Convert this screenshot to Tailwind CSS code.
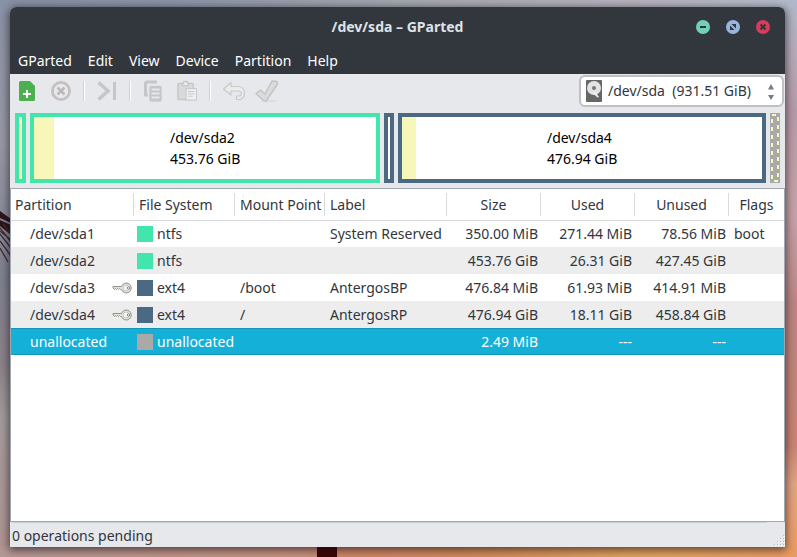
<!DOCTYPE html>
<html lang="en">
<head>
<meta charset="utf-8">
<meta name="viewport" content="width=device-width, initial-scale=1">
<title>/dev/sda – GParted</title>
<script src="https://cdn.jsdelivr.net/npm/@tailwindcss/browser@4"></script>
</head>
<body class="relative isolate flex h-screen flex-col overflow-hidden bg-[#a99598] px-3 pt-[7px] pb-[10px] pl-[10px] font-['Noto_Sans','Open_Sans',sans-serif] text-sm text-[#31363d]">

<!-- Desktop wallpaper -->
<svg class="absolute inset-0 -z-10 h-full w-full" viewBox="0 0 797 557" preserveAspectRatio="none" aria-hidden="true">
  <defs>
    <linearGradient id="top" x1="0" x2="1"><stop offset="0" stop-color="#8790a3"/><stop offset=".2" stop-color="#8b93a7"/><stop offset=".5" stop-color="#a3a7b0"/><stop offset=".8" stop-color="#b6b3bf"/><stop offset="1" stop-color="#b3bccb"/></linearGradient>
    <linearGradient id="left" x1="0" x2="0" y1="0" y2="1"><stop offset="0" stop-color="#8991a5"/><stop offset=".25" stop-color="#9799a5"/><stop offset=".5" stop-color="#7d818f"/><stop offset=".65" stop-color="#8b8289"/><stop offset=".75" stop-color="#a39b9b"/><stop offset="1" stop-color="#b09392"/></linearGradient>
    <linearGradient id="right" x1="0" x2="0" y1="0" y2="1"><stop offset="0" stop-color="#b0b9ca"/><stop offset=".2" stop-color="#b59aa8"/><stop offset=".38" stop-color="#c5a2a6"/><stop offset=".55" stop-color="#bb8581"/><stop offset=".8" stop-color="#c98372"/><stop offset=".87" stop-color="#e0a483"/><stop offset="1" stop-color="#eb9a60"/></linearGradient>
    <linearGradient id="bottom" x1="0" x2="1"><stop offset="0" stop-color="#b29795"/><stop offset=".38" stop-color="#c69280"/><stop offset=".43" stop-color="#cd8568"/><stop offset=".6" stop-color="#d38a58"/><stop offset=".8" stop-color="#dfa25c"/><stop offset="1" stop-color="#e99b62"/></linearGradient>
  </defs>
  <rect width="797" height="8" fill="url(#top)"/>
  <rect width="12" height="557" fill="url(#left)"/>
  <rect x="784" width="13" height="557" fill="url(#right)"/>
  <rect y="546" width="797" height="11" fill="url(#bottom)"/>
  <path d="M0 211l11 8v4l-11-5zM0 220l11 5v10l-11-9z" fill="#2b151a"/>
  <path d="M0 228l11 14M0 234l11 14M0 241l11 15M0 248l8 14M3 224l8 10M0 231l11 9" stroke="#42282e" stroke-width="1.3" fill="none"/>
  <rect x="317" y="546" width="20" height="11" fill="#3c0606"/>
</svg>

<div class="flex min-h-0 flex-1 flex-col rounded-t-md bg-[#e7e8eb] shadow-[0_2px_9px_1px_rgba(25,15,20,0.65)]">

  <header class="rounded-t-md bg-[#32373e] text-white">
    <div class="grid h-10 grid-cols-[1fr_auto_1fr] items-center px-[15px]">
      <span></span>
      <h1 class="font-bold text-[#dfe2e6]">/dev/sda – GParted</h1>
      <div class="flex justify-end gap-4">
        <button type="button" aria-label="Minimize"><svg class="size-[14px]" viewBox="0 0 14 14"><circle cx="7" cy="7" r="7" fill="#71d0b7"/><path d="M4 7h6" stroke="#32373e" stroke-width="2"/></svg></button>
        <button type="button" aria-label="Maximize"><svg class="size-[14px]" viewBox="0 0 14 14"><circle cx="7" cy="7" r="7" fill="#98b5e0"/><path d="M5.500 4H10v4.500zM4 5.500V10h4.500z" fill="#32373e"/></svg></button>
        <button type="button" aria-label="Close"><svg class="size-[14px]" viewBox="0 0 14 14"><circle cx="7" cy="7" r="7" fill="#d83b5c"/><path d="M4.500 4.500l5 5M9.500 4.500l-5 5" stroke="#32373e" stroke-width="2"/></svg></button>
      </div>
    </div>
    <nav class="flex h-[27px] items-center gap-4 px-2" aria-label="Main menu">
      <button type="button">GParted</button>
      <button type="button">Edit</button>
      <button type="button">View</button>
      <button type="button">Device</button>
      <button type="button">Partition</button>
      <button type="button">Help</button>
    </nav>
  </header>

  <div class="flex items-center justify-between pt-px pr-px pl-1">
    <div class="flex h-8 items-center" role="toolbar" aria-label="Actions">
      <button type="button" aria-label="New" class="w-[26px]"><svg class="mx-auto h-5 w-4" viewBox="0 0 16 20"><path d="M1.500 0H11l5 5v13.500a1.500 1.500 0 0 1-1.500 1.500h-13A1.500 1.500 0 0 1 0 18.500v-17A1.500 1.500 0 0 1 1.500 0z" fill="#4caf50"/><path d="M8 9v8M4 13h8" stroke="#fff" stroke-width="2"/></svg></button>
      <button type="button" aria-label="Delete" disabled class="ml-2 w-[26px]"><svg class="mx-auto size-5" viewBox="0 0 20 20" fill="none"><circle cx="10" cy="10" r="8.500" stroke="#c5c1c3" stroke-width="3"/><circle cx="10" cy="10" r="7" fill="#e9e9eb"/><path d="M6.500 6.500l7 7M13.500 6.500l-7 7" stroke="#bdb9bb" stroke-width="2.500"/></svg></button>
      <span class="ml-[9px] h-5 w-0.5 border-r border-l border-l-[#cfd0d3] border-r-white"></span>
      <button type="button" aria-label="Resize/Move" disabled class="ml-3 w-5"><svg class="h-5 w-5" viewBox="0 0 20 20"><path d="M1.500 1.500L11 10l-9.500 8.500" fill="none" stroke="#c5c6c9" stroke-width="3.500"/><path d="M16 1h3v18h-3z" fill="#c5c6c9"/></svg></button>
      <span class="ml-3 h-5 w-0.5 border-r border-l border-l-[#cfd0d3] border-r-white"></span>
      <button type="button" aria-label="Copy" disabled class="ml-3 w-5"><svg class="h-[22px] w-5" viewBox="0 0 20 22"><path d="M14 2H4a1.500 1.500 0 0 0-1.500 1.500V15H5" fill="none" stroke="#c5c6c9" stroke-width="3"/><path d="M8 5.500h9a2 2 0 0 1 2 2V20a2 2 0 0 1-2 2H8a2 2 0 0 1-2-2V7.500a2 2 0 0 1 2-2z" fill="#c5c6c9" stroke="#e7e8eb" stroke-width=".7"/><path d="M8.500 9.500h8M8.500 13.500h8M8.500 17.500h8" stroke="#e7e8eb" stroke-width="2"/></svg></button>
      <button type="button" aria-label="Paste" disabled class="ml-[14px] w-5"><svg class="h-[22px] w-5" viewBox="0 0 21 22"><rect x="1" y="3" width="16" height="17" rx="1" fill="#dadada" stroke="#c5c6c7" stroke-width="1.500"/><path d="M5.500 5.500V3H7V1h4v2h1.500v2.500z" fill="#e9e9ea" stroke="#bdbec0"/><path d="M9.500 8.500h11v12h-11z" fill="#f0f0f1" stroke="#c3c4c6"/><path d="M11.500 11.500h7M11.500 14h7M11.500 16.500h5" stroke="#c6c7c9"/></svg></button>
      <span class="ml-3 h-5 w-0.5 border-r border-l border-l-[#cfd0d3] border-r-white"></span>
      <button type="button" aria-label="Undo" disabled class="ml-3 w-[22px]"><svg class="h-5 w-[22px]" viewBox="0 0 22 20"><path d="M.500 8L8 1.500V5.500h6.500c4 0 7 2.500 7 6.500 0 3.500-2 6-5 6.500h-3V15h2c2 0 3-1 3-2.500S17 10 14.500 10H8v4z" fill="#ebebeb" stroke="#c9c9c8" stroke-width="1.200" stroke-linejoin="round"/></svg></button>
      <button type="button" aria-label="Apply" disabled class="ml-[10px] w-6"><svg class="h-6 w-6" viewBox="0 0 24 24"><ellipse cx="14" cy="22" rx="8" ry="1.500" fill="#dddee1"/><path d="M1 14.500l4.500-3.500 4.500 4L17 2l5 .5.500 2.500-11.500 17H9z" fill="#dadbdb" stroke="#c3c4c5" stroke-width="1.500" stroke-linejoin="round"/></svg></button>
    </div>

    <div class="relative">
      <select aria-label="Device" class="block h-8 w-[205px] appearance-none rounded-md border-2 border-[#bfc0c3] bg-white pr-6 pl-[27px] text-sm">
        <option>/dev/sda &nbsp;(931.51 GiB)</option>
      </select>
      <svg class="pointer-events-none absolute top-[5px] left-[7px] h-[22px] w-4" viewBox="0 0 16 22"><rect width="16" height="22" rx="1" fill="#676767"/><circle cx="8" cy="8" r="7" fill="#e3e3e3"/><path d="M6.500 13l3-1 3.500 5-1.500.5z" fill="#eee"/><circle cx="8" cy="8" r="2" fill="#777"/></svg>
      <svg class="pointer-events-none absolute top-[9px] right-[10px] h-4 w-[6px]" viewBox="0 0 6 16"><path d="M0 5.500L3 0l3 5.500zM0 11l3 5 3-5z" fill="#777b82"/></svg>
    </div>
  </div>

  <!-- Disk map -->
  <section class="flex gap-1 px-[5px] pt-[6px] pb-[5px] leading-[21px] text-black" aria-label="Disk map">
    <div class="flex h-[70px] w-[11px] border-4 border-[#42e5ac] bg-white"><span class="w-0.5 bg-[#f8f7ba]"></span></div>
    <div class="flex h-[70px] flex-[350] border-4 border-[#42e5ac] bg-white">
      <span class="-mr-5 w-5 bg-[#f8f7ba]"></span>
      <div class="m-auto">/dev/sda2<br>453.76 GiB</div>
    </div>
    <div class="h-[70px] w-[10px] border-4 border-[#4b6983] bg-white"></div>
    <div class="flex h-[70px] flex-[368] border-4 border-[#4b6983] bg-white">
      <span class="-mr-[14px] w-[14px] bg-[#f8f7ba]"></span>
      <div class="m-auto">/dev/sda4<br>476.94 GiB</div>
    </div>
    <svg class="h-[70px] w-[10px]" viewBox="0 0 10 70"><path d="M0 0h10v70H0z" fill="#a9a9a9"/><g stroke="#f8f7ba" stroke-width="2"><path d="M2 2h4M4 68h4"/><path d="M8 4v64" stroke-dasharray="4 4"/><path d="M2 6v62" stroke-dasharray="4 4"/></g></svg>
  </section>

  <main class="min-h-0 flex-1 border border-[#9fa8b3] bg-white">
    <table class="w-full table-fixed border-collapse whitespace-nowrap">
      <colgroup><col class="w-[123px]"><col class="w-[101px]"><col class="w-[90px]"><col class="w-[122px]"><col class="w-[94px]"><col class="w-[94px]"><col class="w-[94px]"><col></colgroup>
      <thead>
        <tr class="h-[31px] border-b border-[#d9dadb] text-left">
          <th class="p-0 font-normal"><div class="h-[23px] border-r border-[#d9dadb] px-1 leading-[23px]">Partition</div></th>
          <th class="p-0 font-normal"><div class="h-[23px] border-r border-[#d9dadb] px-[5px] leading-[23px]">File System</div></th>
          <th class="p-0 font-normal"><div class="h-[23px] border-r border-[#d9dadb] pl-[5px] leading-[23px]">Mount Point</div></th>
          <th class="p-0 font-normal"><div class="h-[23px] border-r border-[#d9dadb] px-[5px] leading-[23px]">Label</div></th>
          <th class="p-0 text-center font-normal"><div class="h-[23px] border-r border-[#d9dadb] leading-[23px]">Size</div></th>
          <th class="p-0 text-center font-normal"><div class="h-[23px] border-r border-[#d9dadb] leading-[23px]">Used</div></th>
          <th class="p-0 text-center font-normal"><div class="h-[23px] border-r border-[#d9dadb] leading-[23px]">Unused</div></th>
          <th class="p-0 text-center font-normal"><div class="h-[23px] leading-[23px]">Flags</div></th>
        </tr>
      </thead>
      <tbody>
        <tr class="h-[27px]">
          <td class="p-0 pl-[19px]">/dev/sda1</td>
          <td class="p-0 pl-[3px]"><div class="flex items-center gap-1"><span class="size-4 bg-[#42e5ac]"></span>ntfs</div></td>
          <td class="p-0 pl-[5px]"></td><td class="p-0 pl-[5px]">System Reserved</td>
          <td class="p-0 pr-[3px] text-right">350.00 MiB</td><td class="p-0 pr-[3px] text-right">271.44 MiB</td><td class="p-0 pr-[3px] text-right">78.56 MiB</td><td class="p-0 pl-[5px]">boot</td>
        </tr>
        <tr class="h-[27px] bg-[#ededed]">
          <td class="p-0 pl-[19px]">/dev/sda2</td>
          <td class="p-0 pl-[3px]"><div class="flex items-center gap-1"><span class="size-4 bg-[#42e5ac]"></span>ntfs</div></td>
          <td class="p-0"></td><td class="p-0"></td>
          <td class="p-0 pr-[3px] text-right">453.76 GiB</td><td class="p-0 pr-[3px] text-right">26.31 GiB</td><td class="p-0 pr-[3px] text-right">427.45 GiB</td><td class="p-0"></td>
        </tr>
        <tr class="h-[27px]">
          <td class="p-0 pl-[19px]"><div class="flex items-center justify-between pr-[2px]">/dev/sda3
            <svg class="h-3 w-5" viewBox="0 0 20 12" role="img" aria-label="Mounted"><path d="M1 4.500h8.500a5 5 0 1 1 0 3H8.500L7.500 6.500l-1 1-1-1-1 1-1-1-1 1L1 6z" fill="#e3e3de" stroke="#92938e"/><circle cx="14" cy="6" r="3" fill="#f3f3f0" stroke="#b5b5b0" stroke-width=".7"/><circle cx="16.500" cy="6" r="1.200" fill="#fff" stroke="#85857f"/></svg></div></td>
          <td class="p-0 pl-[3px]"><div class="flex items-center gap-1"><span class="size-4 bg-[#4b6983]"></span>ext4</div></td>
          <td class="p-0 pl-[5px]">/boot</td><td class="p-0 pl-[5px]">AntergosBP</td>
          <td class="p-0 pr-[3px] text-right">476.84 MiB</td><td class="p-0 pr-[3px] text-right">61.93 MiB</td><td class="p-0 pr-[3px] text-right">414.91 MiB</td><td class="p-0"></td>
        </tr>
        <tr class="h-[27px] bg-[#ededed]">
          <td class="p-0 pl-[19px]"><div class="flex items-center justify-between pr-[2px]">/dev/sda4
            <svg class="h-3 w-5" viewBox="0 0 20 12" role="img" aria-label="Mounted"><path d="M1 4.500h8.500a5 5 0 1 1 0 3H8.500L7.500 6.500l-1 1-1-1-1 1-1-1-1 1L1 6z" fill="#e3e3de" stroke="#92938e"/><circle cx="14" cy="6" r="3" fill="#f3f3f0" stroke="#b5b5b0" stroke-width=".7"/><circle cx="16.500" cy="6" r="1.200" fill="#fff" stroke="#85857f"/></svg></div></td>
          <td class="p-0 pl-[3px]"><div class="flex items-center gap-1"><span class="size-4 bg-[#4b6983]"></span>ext4</div></td>
          <td class="p-0 pl-[5px]">/</td><td class="p-0 pl-[5px]">AntergosRP</td>
          <td class="p-0 pr-[3px] text-right">476.94 GiB</td><td class="p-0 pr-[3px] text-right">18.11 GiB</td><td class="p-0 pr-[3px] text-right">458.84 GiB</td><td class="p-0"></td>
        </tr>
        <tr class="h-[27px] bg-[#15b0d8] text-white shadow-[inset_0_1px_#1295b8,inset_0_-1px_#1295b8]" aria-selected="true">
          <td class="p-0 pl-[19px]">unallocated</td>
          <td class="p-0 pl-[3px]"><div class="flex items-center gap-1"><span class="size-4 bg-[#a9a9a9]"></span>unallocated</div></td>
          <td class="p-0"></td><td class="p-0"></td>
          <td class="p-0 pr-[3px] text-right">2.49 MiB</td><td class="p-0 pr-[3px] text-right">---</td><td class="p-0 pr-[3px] text-right">---</td><td class="p-0"></td>
        </tr>
      </tbody>
    </table>
  </main>

  <footer class="flex h-[25px] items-end justify-between pl-[2px]">
    <p class="h-full flex-1 border-t border-[#c5d0d8] leading-[25px]">0 operations pending</p>
    <svg class="h-[13px] w-[18px]" viewBox="0 0 18 13" aria-hidden="true"><g fill="#bcbdc0"><path d="M16 1h1v1h-1zM13 4h1v1h-1zM16 4h1v1h-1zM10 7h1v1h-1zM13 7h1v1h-1zM16 7h1v1h-1zM7 10h1v1H7zM10 10h1v1h-1zM13 10h1v1h-1zM16 10h1v1h-1z"/></g><g fill="#fff"><path d="M17 2h1v1h-1zM14 5h1v1h-1zM17 5h1v1h-1zM11 8h1v1h-1zM14 8h1v1h-1zM17 8h1v1h-1zM8 11h1v1H8zM11 11h1v1h-1zM14 11h1v1h-1zM17 11h1v1h-1z"/></g></svg>
  </footer>
</div>
</body>
</html>
